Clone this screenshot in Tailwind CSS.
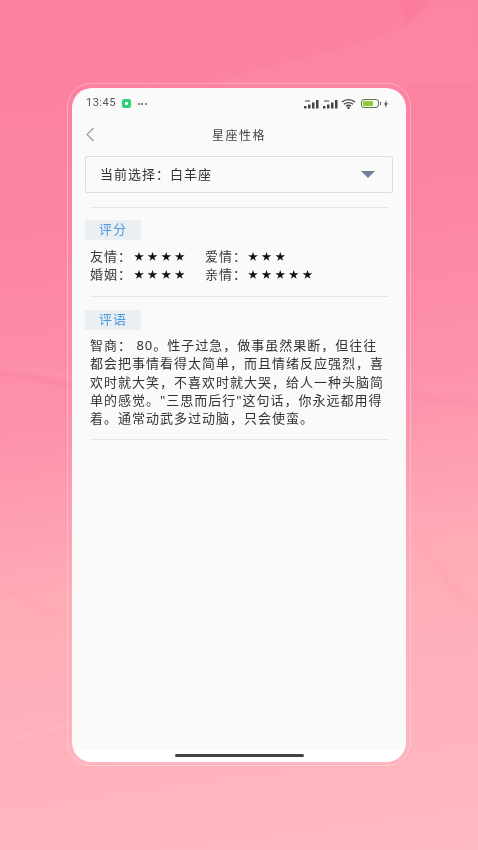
<!DOCTYPE html>
<html lang="zh-CN">
<head>
  <meta charset="UTF-8"/>
  <title>星座性格</title>
  <script src="https://cdn.jsdelivr.net/npm/@tailwindcss/browser@4"></script>
</head>
<body class="relative w-[478px] h-[850px] overflow-hidden bg-[linear-gradient(172deg,#fc7f9f_0%,#fc84a3_25%,#fd92ac_48%,#ffabb6_66%,#ffb9c1_100%)] font-['Noto_Sans','Noto_Sans_CJK_SC',sans-serif]">
  <!-- soft waves in the wallpaper -->
  <svg class="absolute inset-0 blur-[2px]" width="478" height="850" viewBox="0 0 478 850" fill="none">
    <path d="M200 85C290 60 390 40 415 20 430 8 440 0 445 0H478V85Z" fill="#fff" opacity=".04"/>
    <path d="M405 25C420 15 425 5 428 0H400Z" fill="#f76f93" opacity=".3"/>
    <path d="M0 372C25 376 50 380 72 386" stroke="#f9799b" stroke-width="3" opacity=".45"/>
    <path d="M0 368C25 368 50 372 72 378" stroke="#fff" stroke-width="1" opacity=".2"/>
    <path d="M408 386C430 386 455 388 478 390" stroke="#fff" stroke-width="1" opacity=".2"/>
    <path d="M408 394C430 400 455 402 478 404" stroke="#fb7f9f" stroke-width="3" opacity=".35"/>
    <path d="M0 585C25 600 45 610 70 622" stroke="#fd9dab" stroke-width="2" opacity=".5"/>
    <path d="M415 530C435 570 455 590 478 612" stroke="#ff9fac" stroke-width="6" opacity=".35"/>
    <path d="M0 742C25 735 50 730 72 724" stroke="#fff" stroke-width="1.500" opacity=".18"/>
  </svg>

  <div class="relative flex justify-center pt-[83px]">
    <!-- pale frame round the phone -->
    <div class="w-[344px] h-[683px] rounded-[24px] border border-white/30 px-[4px] pt-[4px] pb-[3px]">
      <div class="w-full h-full rounded-[20px] bg-[#fafafa] flex flex-col overflow-hidden blur-[0.5px]">

        <!-- status bar -->
        <div class="h-[30px] shrink-0 flex items-center justify-between pl-[14px] pr-[18px] pt-[1px]">
          <div class="flex items-center text-[11px] text-[#555]">
            <span class="font-['Roboto'] tracking-[0.5px]">13:45</span>
            <span class="ml-[6px] w-[9px] h-[9px] rounded-[2px] bg-[#2fd07a] flex items-center justify-center">
              <span class="w-[3px] h-[3px] bg-white rounded-[1px]"></span>
            </span>
            <span class="ml-[7px] flex gap-[1.5px]">
              <span class="w-[2px] h-[2px] rounded-full bg-[#666]"></span>
              <span class="w-[2px] h-[2px] rounded-full bg-[#666]"></span>
              <span class="w-[2px] h-[2px] rounded-full bg-[#666]"></span>
            </span>
          </div>
          <div class="flex items-center">
            <svg width="16" height="10" viewBox="0 0 16 10" fill="#444"><rect x="0" y="7" width="2.500" height="2.500"/><rect x="4" y="5.500" width="2.500" height="4"/><rect x="8" y="3.500" width="2.500" height="6"/><rect x="12" y="1" width="2.500" height="8.500"/><rect x="1" y="1" width="5" height="2" opacity=".5"/></svg>
            <svg class="ml-[3px]" width="16" height="10" viewBox="0 0 16 10" fill="#444"><rect x="0" y="7" width="2.500" height="2.500"/><rect x="4" y="5.500" width="2.500" height="4"/><rect x="8" y="3.500" width="2.500" height="6"/><rect x="12" y="1" width="2.500" height="8.500"/><rect x="1" y="1" width="5" height="2" opacity=".5"/></svg>
            <svg class="ml-[2px]" width="15" height="11" viewBox="0 0 15 11" fill="none" stroke="#444" stroke-width="1.300"><path d="M1 4c3.600-3.200 9.400-3.200 13 0"/><path d="M3 6.200c2.500-2.200 6.500-2.200 9 0"/><path d="M5 8.300c1.400-1.200 3.600-1.200 5 0"/><circle cx="7.500" cy="9.800" r=".6" fill="#444"/></svg>
            <span class="ml-[5px] w-[18px] h-[9px] rounded-[3px] border border-[#5f7a3c] p-[1px] flex">
              <span class="w-[10px] h-full rounded-[1px] bg-[#8ecb3c]"></span>
            </span>
            <span class="w-[1.5px] h-[3px] bg-[#666] ml-[1px]"></span>
            <svg class="ml-[3px]" width="4" height="8" viewBox="0 0 4 8" fill="#555"><path d="M2.500 0 0 4.500h1.500L1 8l3-4.800H2.300z"/></svg>
          </div>
        </div>

        <!-- title bar -->
        <div class="relative h-[34px] shrink-0 flex items-center justify-center pt-[2px] text-[12px] tracking-[1.5px] text-[#444]">
          <svg class="absolute left-[13px] top-[9px]" width="10" height="15" viewBox="0 0 10 15" fill="none" stroke="#999" stroke-width="1.100"><path d="M8.500 1 2 7.500 8.500 14"/></svg>
          星座性格
        </div>

        <!-- picker -->
        <div class="mx-[13px] mt-[4px] h-[37px] shrink-0 flex items-center justify-between rounded-[2px] border border-[#dcdcdc] pl-[14px] pr-[17px] text-[13px] tracking-[1px] text-[#333]">
          <span>当前选择：白羊座</span>
          <span class="w-0 h-0 border-x-[7px] border-x-transparent border-t-[7px] border-t-[#6b8299]"></span>
        </div>

        <div class="mx-[18px] mt-[14px] h-[1px] shrink-0 bg-[#e6e6e6]"></div>

        <!-- scores -->
        <div class="mx-[13px] mt-[12px] w-[56px] h-[20px] shrink-0 bg-[#ebeff2] flex items-center justify-center text-[13px] tracking-[1px] text-[#4a9be0]">评分</div>
        <div class="mx-[18px] mt-[7px] grid grid-cols-[115px_1fr] text-[13px] tracking-[1px] leading-[18px] text-[#3c3c3c]">
          <div class="flex items-center">友情：<span class="ml-[2px] text-[10px] tracking-[3.6px] text-[#111]">★★★★</span></div>
          <div class="flex items-center">爱情：<span class="ml-[1px] text-[10px] tracking-[3.6px] text-[#111]">★★★</span></div>
          <div class="flex items-center">婚姻：<span class="ml-[2px] text-[10px] tracking-[3.6px] text-[#111]">★★★★</span></div>
          <div class="flex items-center">亲情：<span class="ml-[1px] text-[10px] tracking-[3.6px] text-[#111]">★★★★★</span></div>
        </div>

        <div class="mx-[18px] mt-[13px] h-[1px] shrink-0 bg-[#e6e6e6]"></div>

        <!-- comment -->
        <div class="mx-[13px] mt-[13px] w-[56px] h-[20px] shrink-0 bg-[#ebeff2] flex items-center justify-center text-[13px] tracking-[1px] text-[#4a9be0]">评语</div>
        <p class="mx-[18px] mt-[6px] text-[13px] tracking-[1px] leading-[18.300px] text-[#333]">智商： 80。性子过急，做事虽然果断，但往往都会把事情看得太简单，而且情绪反应强烈，喜欢时就大笑，不喜欢时就大哭，给人一种头脑简单的感觉。"三思而后行"这句话，你永远都用得着。通常动武多过动脑，只会使蛮。</p>

        <div class="mx-[18px] mt-[12px] h-[1px] shrink-0 bg-[#e6e6e6]"></div>

        <!-- nav bar strip -->
        <div class="mt-auto h-[12px] shrink-0 bg-white flex justify-center pt-[4px]">
          <span class="w-[129px] h-[3px] rounded-full bg-[#444]"></span>
        </div>
      </div>
    </div>
  </div>
</body>
</html>
